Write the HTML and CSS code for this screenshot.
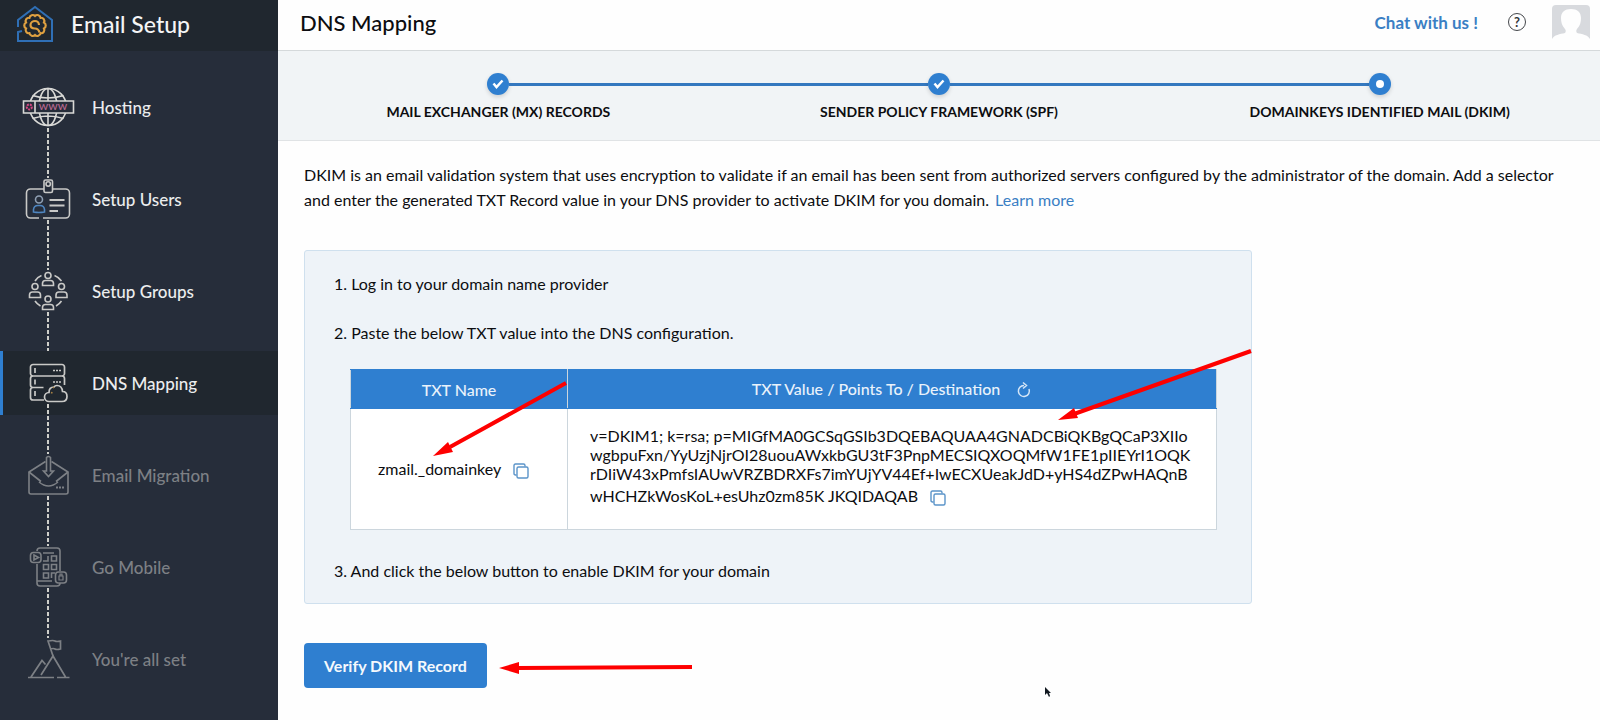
FILE: index.html
```html
<!DOCTYPE html>
<html lang="en">
<head>
    <meta charset="UTF-8">
    <meta name="viewport" content="width=device-width, initial-scale=1.0">
    <title>DNS Mapping - Email Setup</title>
    <link rel="stylesheet" href="styles.css">
</head>
<body>
    <aside class="sidebar">
        <div class="brand">
            <svg class="brand-logo" width="38" height="38" viewBox="0 0 38 38" fill="none">
                <path d="M2 22V15L19 2l17 13v21H2V27l4-1" stroke="#2f6fb5" stroke-width="2"/>
                <path d="M19 11a3.300 3.300 0 0 1 5.600 1.800 3.300 3.300 0 0 1 3.400 4.800 3.300 3.300 0 0 1 0 5.800 3.300 3.300 0 0 1-3.400 4.800 3.300 3.300 0 0 1-5.600 1.800 3.300 3.300 0 0 1-5.600-1.800 3.300 3.300 0 0 1-3.400-4.800 3.300 3.300 0 0 1 0-5.800 3.300 3.300 0 0 1 3.400-4.800A3.300 3.300 0 0 1 19 11z" stroke="#dfa040" stroke-width="2.200"/>
                <path d="M23 20c0-2.500-2-4-4-4s-4.500 1.500-4.500 4 2 3.500 4.500 3.500 4 2 4.500 4" stroke="#dfa040" stroke-width="2.200"/>
            </svg>
            <span>Email Setup</span>
        </div>
        <nav>
            <ul class="menu">
                <li>
                    <a href="#hosting">
                        <svg class="icon" width="54" height="40" viewBox="0 0 54 40" fill="none" stroke="#d9d9d6" stroke-width="1.600">
                            <circle cx="27" cy="20" r="18.500"/>
                            <ellipse cx="27" cy="20" rx="9" ry="18.500"/>
                            <path d="M27 1v38M11.500 8.500q15.500 5 31 0M11.500 31.500q15.500-5 31 0"/>
                            <path class="plate" d="M2.500 14h50v12h-50zM14 14v12"/>
                            <circle cx="8.300" cy="20" r="2.500" stroke="#d64a83" stroke-width="2" stroke-dasharray="2 1"/>
                            <text x="32" y="23" class="www">www</text>
                        </svg>
                        <span>Hosting</span>
                    </a>
                </li>
                <li>
                    <a href="#users">
                        <svg class="icon" width="54" height="40" viewBox="0 0 54 40" fill="none" stroke="#c9c9c7" stroke-width="1.600">
                            <path d="M23 10H9.500a4 4 0 0 0-4 4v21a4 4 0 0 0 4 4H18M22 39h22.500a4 4 0 0 0 4-4V14a4 4 0 0 0-4-4H31"/>
                            <rect x="23" y="1" width="8.500" height="12.500" rx="1.500"/>
                            <circle cx="27.200" cy="5" r="2.200"/>
                            <circle cx="18" cy="20.500" r="3.500" stroke="#8f9fb3"/>
                            <path d="M12.500 33v-2.500a4.500 4.500 0 0 1 4.500-4h2a4.500 4.500 0 0 1 4.500 4V33q-5.500 1-11 0z" stroke="#4f86c0"/>
                            <path d="M28.500 21h15M28.500 26.500h15M28.500 32h8.500" stroke-width="2"/>
                        </svg>
                        <span>Setup Users</span>
                    </a>
                </li>
                <li>
                    <a href="#groups">
                        <svg class="icon" width="54" height="40" viewBox="0 0 54 40" fill="none" stroke="#c9c9c7" stroke-width="1.600">
                            <circle cx="27" cy="4.500" r="3"/>
                            <path d="M21.500 14.500v-2q0-3 3-3h5q3 0 3 3v2z"/>
                            <circle cx="14" cy="15.500" r="3"/>
                            <path d="M8.500 26.500v-2.500q0-3 3-3h5q3 0 3 3v2.500z"/>
                            <circle cx="40.500" cy="15.500" r="3"/>
                            <path d="M35 26.500v-2.500q0-3 3-3h5q3 0 3 3v2.500z"/>
                            <circle cx="27" cy="28" r="3"/>
                            <path d="M21.500 38.500v-2q0-3 3-3h5q3 0 3 3v2z"/>
                            <path d="M14 10q2.500-4 6.500-5.500M33.500 4.500q4 1.500 7 5.500M14 30q2 3 5.500 5M40.500 30q-2 3-5.500 5"/>
                        </svg>
                        <span>Setup Groups</span>
                    </a>
                </li>
                <li>
                    <a href="#dns" class="active" aria-current="page">
                        <svg class="icon" width="54" height="40" viewBox="0 0 54 40" fill="none" stroke="#c9c9c7" stroke-width="1.700">
                            <path d="M12 13h29a2.500 2.500 0 0 0 2.500-2.500V4A2.500 2.500 0 0 0 41 1.500H12A2.500 2.500 0 0 0 9.500 4v6.500A2.500 2.500 0 0 0 12 13a2.500 2.500 0 0 0-2.500 2.500V22a2.500 2.500 0 0 0 2.500 2.500h10.500M41 13a2.500 2.500 0 0 1 2.500 2.500V22M12 24.500A2.500 2.500 0 0 0 9.500 27v7.500A2.500 2.500 0 0 0 12 37h11"/>
                            <path d="M14 5v5M14 16.500v5M14 28v5"/>
                            <path d="M32 7.500h8M32 19h8" stroke-dasharray="2 1"/>
                            <path d="M28 38.500a4.500 4.500 0 0 1 0-9q0-5.500 5-5.500 1-1.500 3-1.500 5 0 5.500 6 4.500 0 4.500 5t-5 5z"/>
                            <path d="M30 29.500l1.500.5M32 24l1 1" stroke="#a98245"/>
                        </svg>
                        <span>DNS Mapping</span>
                    </a>
                </li>
                <li>
                    <a href="#migration" class="pending">
                        <svg class="icon" width="54" height="40" viewBox="0 0 54 40" fill="none" stroke="#7d8085" stroke-width="1.600">
                            <path d="M24.500 6.500L8 17v20a2 2 0 0 0 2 2h35a2 2 0 0 0 2-2V17L30.500 6.500"/>
                            <path d="M8 17l12 9.500M47 17l-12 9.500M18 27q9.500 8 19 0"/>
                            <path d="M25.500 16V2.500q2-2 4 0V16h3l-5 5.500-5-5.500z"/>
                            <path d="M35 32.500h8" stroke-width="2" stroke-dasharray="2 1"/>
                        </svg>
                        <span>Email Migration</span>
                    </a>
                </li>
                <li>
                    <a href="#mobile" class="pending">
                        <svg class="icon" width="54" height="40" viewBox="0 0 54 40" fill="none" stroke="#7d8085" stroke-width="1.600">
                            <path d="M16 4q0-3 3-3h17q3 0 3 3v20M16 17v19q0 3 3 3h17q3 0 3-3M16 34h15M22 6h11"/>
                            <rect x="9.500" y="5.500" width="10.500" height="10" rx="3"/>
                            <path d="M13 8l4.500 2.500-4.500 2.500z"/>
                            <path d="M22 14h5V9M30.500 9h5v5h-5zM22.500 17.500h5v5h-5zM30.500 17.500h5v5h-5zM22.500 26h5v5h-5zM34 26h-3.500v5"/>
                            <rect x="34.500" y="25" width="11" height="11" rx="3"/>
                            <path d="M38 29h4v4h-4zM39 29v-2h2v2" stroke-width="1.200"/>
                        </svg>
                        <span>Go Mobile</span>
                    </a>
                </li>
                <li>
                    <a href="#done" class="pending">
                        <svg class="icon" width="54" height="40" viewBox="0 0 54 40" fill="none" stroke="#7d8085" stroke-width="1.700">
                            <path d="M7 38.500h26M36 38.500h12.500M10 38L21 21.500l3.500 4M20 36l12-19 12.500 21"/>
                            <path d="M32 17L27 2q5.500-1 7 0t5.500 0v8q-4 1-5.500 0t-4.500 0"/>
                        </svg>
                        <span>You're all set</span>
                    </a>
                </li>
            </ul>
        </nav>
    </aside>

    <main class="main">
        <header class="topbar">
            <h1>DNS Mapping</h1>
            <div class="topbar-right">
                <a href="#chat" class="chat">Chat with us !</a>
                <button type="button" class="help" aria-label="Help">?</button>
                <svg class="avatar" width="38" height="34" viewBox="0 0 38 34">
                    <path d="M0 34V4q0-4 4-4h30q4 0 4 4v30H0z" fill="#d8dade"/>
                    <path d="M0 34c2-4 8-5 13-6 1-1 1-3 0-4-3-3-4-7-4-11C9 7 13 4 19 4s10 3 10 9c0 4-1 8-4 11-1 1-1 3 0 4 5 1 11 2 13 6z" fill="#fefefe"/>
                </svg>
            </div>
        </header>

        <ol class="steps">
            <li>
                <div class="track">
                    <span class="dot"><svg width="12" height="10" viewBox="0 0 12 10"><path d="M1.500 4.500l3 3.500 6-6.500" fill="none" stroke="#fff" stroke-width="2.500"/></svg></span>
                </div>
                Mail Exchanger (MX) Records
            </li>
            <li>
                <div class="track">
                    <span class="dot"><svg width="12" height="10" viewBox="0 0 12 10"><path d="M1.500 4.500l3 3.500 6-6.500" fill="none" stroke="#fff" stroke-width="2.500"/></svg></span>
                </div>
                Sender Policy Framework (SPF)
            </li>
            <li>
                <div class="track">
                    <span class="dot"><svg width="8" height="8" viewBox="0 0 8 8"><circle cx="4" cy="4" r="4" fill="#fff"/></svg></span>
                </div>
                DomainKeys Identified Mail (DKIM)
            </li>
        </ol>

        <section class="content">
            <p class="intro">DKIM is an email validation system that uses encryption to validate if an email has been sent from authorized servers configured by the administrator of the domain. Add a selector and enter the generated TXT Record value in your DNS provider to activate DKIM for you domain. <a href="#learn">Learn more</a></p>

            <div class="panel">
                <p>1. Log in to your domain name provider</p>
                <p>2. Paste the below TXT value into the DNS configuration.</p>
                <table class="records">
                    <thead>
                        <tr>
                            <th class="col-name">TXT Name</th>
                            <th>
                                TXT Value / Points To / Destination
                                <button type="button" class="icon-btn refresh" aria-label="Refresh">
                                    <svg width="16" height="18" viewBox="0 0 16 18" fill="none" stroke="#d5e6f7" stroke-width="1.500"><path d="M8 4.500a5.500 5.500 0 1 0 5 3.500M7 1.500l3.500 3L7 7.500"/></svg>
                                </button>
                            </th>
                        </tr>
                    </thead>
                    <tbody>
                        <tr>
                            <td class="name">
                                zmail._domainkey
                                <button type="button" class="icon-btn" aria-label="Copy name">
                                    <svg width="16" height="16" viewBox="0 0 16 16" fill="none" stroke="#5b94c9" stroke-width="1.400"><path d="M3.500 12H2.500q-1.500 0-1.500-1.500v-8Q1 1 2.500 1h8Q12 1 12 2.500v1"/><rect x="4" y="4" width="11" height="11" rx="1.500" fill="#fff"/></svg>
                                </button>
                            </td>
                            <td class="value">
                                v=DKIM1; k=rsa; p=MIGfMA0GCSqGSIb3DQEBAQUAA4GNADCBiQKBgQCaP3XIIo<br>
                                wgbpuFxn/YyUzjNjrOI28uouAWxkbGU3tF3PnpMECSIQXOQMfW1FE1pIIEYrI1OQK<br>
                                rDIiW43xPmfsIAUwVRZBDRXFs7imYUjYV44Ef+IwECXUeakJdD+yHS4dZPwHAQnB<br>
                                <span class="last-line">wHCHZkWosKoL+esUhz0zm85K JKQIDAQAB
                                <button type="button" class="icon-btn" aria-label="Copy value">
                                    <svg width="16" height="16" viewBox="0 0 16 16" fill="none" stroke="#5b94c9" stroke-width="1.400"><path d="M3.500 12H2.500q-1.500 0-1.500-1.500v-8Q1 1 2.500 1h8Q12 1 12 2.500v1"/><rect x="4" y="4" width="11" height="11" rx="1.500" fill="#fff"/></svg>
                                </button></span>
                            </td>
                        </tr>
                    </tbody>
                </table>
                <p>3. And click the below button to enable DKIM for your domain</p>
            </div>

            <button type="button" class="verify">Verify DKIM Record</button>
        </section>
    </main>

    <!-- arrows and mouse pointer on top of the page -->
    <svg class="marks" width="1600" height="720" viewBox="0 0 1600 720" aria-hidden="true">
        <g fill="#fe0000" stroke="#fe0000">
            <path d="M566 383L450 447M1251 351L1074 414M692 667L518 668" stroke-width="4"/>
            <path d="M433 456l15-14 5 10zM1058 420l16-12 4 10zM499 668l20-6v12z" stroke="none"/>
        </g>
        <path d="M1045 687v8l2-2 2 4 1-1-1-3h2z" fill="#111820"/>
    </svg>
</body>
</html>
```
FILE: styles.css
```css
* {
    box-sizing: border-box;
}
body {
    margin: 0;
    display: flex;
    min-height: 100vh;
    position: relative;
    overflow-x: hidden;
    font-family: Lato, "Liberation Sans", sans-serif;
    font-size: 16px;
    color: #0c0d10;
    background-color: #fefefe;
}
a {
    color: #3a7fc4;
    text-decoration: none;
}
button {
    font-family: inherit;
    cursor: pointer;
}

/* sidebar */
.sidebar {
    width: 278px;
    flex-shrink: 0;
    background-color: #262d3a;
}
.brand {
    display: flex;
    align-items: center;
    gap: 17px;
    height: 51px;
    padding: 0 16px 4px;
    font-size: 23px;
    font-weight: 500;
    color: #f4f5f6;
    background-color: #20272f;
}
.menu {
    list-style: none;
    margin: 0;
    padding: 24px 0;
    display: flex;
    flex-direction: column;
    gap: 28px;
}
.menu li {
    position: relative;
}
.menu a {
    display: flex;
    align-items: center;
    gap: 17px;
    height: 64px;
    padding-left: 18px;
    border-left: 3px solid transparent;
    font-size: 17px;
    font-weight: 500;
    color: #ecedee;
}
.menu a.active {
    background-color: #20272f;
    border-left-color: #2f7fd0;
}
.menu a.pending {
    color: #7d8085;
}
/* dotted line down to the next icon */
.menu li:not(:last-child)::after {
    content: "";
    position: absolute;
    left: 47px;
    top: 53px;
    width: 2px;
    height: 50px;
    background: repeating-linear-gradient(#cfcfca 0 4px, transparent 4px 6px);
}
.plate {
    fill: #262d3a;
}
.www {
    font-size: 12px;
    fill: #b5688f;
    stroke: none;
    text-anchor: middle;
}

/* top bar */
.main {
    flex: 1;
    min-width: 0;
}
.topbar {
    display: flex;
    justify-content: space-between;
    align-items: center;
    height: 51px;
    padding: 0 10px 6px 22px;
    border-bottom: 1px solid #d5d9db;
}
.topbar h1 {
    margin: 0;
    font-size: 22px;
    font-weight: 500;
}
.topbar-right {
    display: flex;
    align-items: center;
    gap: 30px;
}
.chat {
    font-size: 17px;
    font-weight: 700;
}
.help {
    width: 18px;
    height: 18px;
    padding: 0;
    border: 1px solid #44474b;
    border-radius: 50%;
    background: none;
    font-size: 13px;
    font-weight: 700;
    line-height: 16px;
    color: #33363a;
}
.avatar {
    margin-left: -4px;
}

/* progress steps */
.steps {
    list-style: none;
    display: flex;
    margin: 0;
    padding: 22px 0 19px;
    background-color: #f1f4f6;
    border-bottom: 1px solid #e0e3e5;
}
.steps li {
    flex: 1;
    text-align: center;
    text-transform: uppercase;
    font-size: 14px;
    font-weight: 700;
    line-height: 18px;
}
.track {
    display: flex;
    align-items: center;
    margin-bottom: 8px;
}
.track::before,
.track::after {
    content: "";
    flex: 1;
    height: 3px;
    background-color: #3478bf;
}
.steps li:first-child .track::before,
.steps li:last-child .track::after {
    background: none;
}
.dot {
    display: flex;
    align-items: center;
    justify-content: center;
    width: 22px;
    height: 22px;
    border-radius: 50%;
    background-color: #2f7fd0;
    box-shadow: 0 2px 4px rgba(0, 0, 0, 0.15);
}

/* content */
.content {
    padding: 21px 26px;
}
.intro {
    margin: 0;
    font-size: 16px;
    line-height: 25px;
}
.intro a {
    display: inline-block;
    margin-left: 2px;
}
.panel {
    max-width: 948px;
    margin: 38px 0 39px;
    padding: 20px 34px 20px 29px;
    border: 1px solid #cfe0ee;
    border-radius: 3px;
    background-color: #eef3f8;
}
.panel p {
    margin: 0 0 24px;
    line-height: 25px;
}
.panel p:last-child {
    margin: 28px 0 0;
}
.records {
    width: calc(100% - 16px);
    margin-left: 16px;
    border-collapse: collapse;
    background-color: #fff;
}
.records th,
.records td {
    border: 1px solid #ccd6dd;
    text-align: center;
}
.records th {
    height: 39px;
    padding: 0;
    font-weight: 500;
    color: #e9f2fb;
    background-color: #2f7fd0;
    border-top-color: #2f7fd0;
    border-bottom-color: #2f7fd0;
}
.records .col-name {
    width: 217px;
}
.records .name {
    padding-right: 12px;
}
.records .value {
    padding: 17px 20px 20px 22px;
    text-align: left;
    line-height: 19px;
}
.last-line {
    line-height: 26px;
}
.icon-btn {
    padding: 0;
    margin-left: 8px;
    border: none;
    background: none;
    vertical-align: middle;
}
.icon-btn svg {
    display: block;
}
.refresh {
    margin-left: 12px;
}
.verify {
    display: block;
    height: 45px;
    padding: 0 20px;
    border: none;
    border-radius: 4px;
    background-color: #2f7fd0;
    color: #f5f9fd;
    font-size: 16px;
    font-weight: 700;
}

.marks {
    position: absolute;
    top: 0;
    left: 0;
    pointer-events: none;
}
```
